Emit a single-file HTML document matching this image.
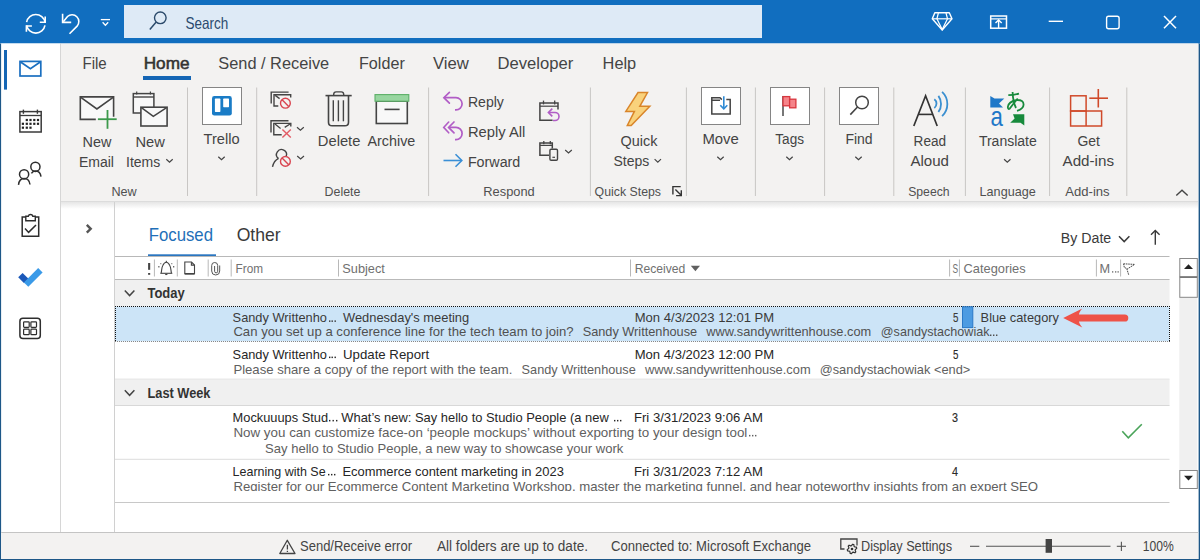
<!DOCTYPE html>
<html><head><meta charset="utf-8"><title>Outlook</title>
<style>html,body{margin:0;padding:0;background:#fff;overflow:hidden}svg{display:block}text{font-family:"Liberation Sans", sans-serif;white-space:pre}</style>
</head><body>
<svg width="1200" height="560" viewBox="0 0 1200 560">
<rect x="0" y="0" width="1200" height="560" fill="#ffffff"/>
<rect x="0" y="0" width="1200" height="43.5" fill="#116ebf"/>
<rect x="124" y="5" width="638" height="33" fill="#deeaf6"/>
<rect x="0" y="43.5" width="60.5" height="489" fill="#ffffff"/>
<rect x="0" y="43.5" width="1.1" height="516.5" fill="#1d5788"/>
<line x1="60.5" y1="43.5" x2="60.5" y2="532" stroke="#d6d6d6" stroke-width="1"/>
<rect x="61" y="43.5" width="1137" height="158" fill="#f3f2f1"/>
<defs><linearGradient id="sh" x1="0" y1="0" x2="0" y2="1"><stop offset="0" stop-color="#e6e6e6"/><stop offset="1" stop-color="#ffffff"/></linearGradient></defs>
<line x1="61" y1="201.5" x2="1198" y2="201.5" stroke="#dcdcdc" stroke-width="1"/>
<rect x="61" y="202" width="1137" height="7" fill="url(#sh)"/>
<rect x="1198.6" y="43.5" width="1.4" height="516.5" fill="#1d5788"/>
<line x1="114.5" y1="202" x2="114.5" y2="532" stroke="#d0d0d0" stroke-width="1"/>
<rect x="1.2" y="532" width="1197" height="28" fill="#f3f2f1"/>
<line x1="1.2" y1="532.5" x2="1198" y2="532.5" stroke="#c4c4c4" stroke-width="1"/>
<rect x="0" y="559" width="1200" height="1" fill="#1d5788"/>
<path d="M26.64 22.2 A9.3 9.3 0 0 1 44.96 22.2" stroke="#ffffff" fill="none" stroke-width="1.6"/>
<path d="M44.96 25.4 A9.3 9.3 0 0 1 26.64 25.4" stroke="#ffffff" fill="none" stroke-width="1.6"/>
<path d="M45.2 16.5 V22.3 H39.8" stroke="#ffffff" fill="none" stroke-width="1.6"/>
<path d="M26.4 31.8 V26 H31.9" stroke="#ffffff" fill="none" stroke-width="1.6"/>
<path d="M62.6 13.8 V22.4 H71.2" stroke="#ffffff" fill="none" stroke-width="1.6"/>
<path d="M63.3 21.8 L67.5 16.5 A6.8 6.8 0 0 1 77.1 26.1 L69.5 33.8" stroke="#ffffff" fill="none" stroke-width="1.6"/>
<line x1="100.8" y1="19.6" x2="110" y2="19.6" stroke="#ffffff" stroke-width="1.3"/>
<path d="M102.6 22.3 L105.4 25.3 L108.2 22.3" stroke="#ffffff" fill="none" stroke-width="1.3"/>
<circle cx="160.3" cy="17.8" r="5.8" stroke="#2b4a6b" stroke-width="1.4" fill="none"/>
<line x1="156" y1="22.2" x2="149.8" y2="29.6" stroke="#2b4a6b" stroke-width="1.5"/>
<text x="185.50" y="29.2" font-size="16.5" fill="#2b4a6e" font-weight="normal" text-anchor="start" textLength="42.81" lengthAdjust="spacingAndGlyphs">Search</text>
<path d="M934.8 12.8 H949.3 L952 18.8 L942.2 30 L932.3 18.8 Z" stroke="#ffffff" fill="none" stroke-width="1.4" stroke-linejoin="round"/>
<line x1="932.6" y1="18.8" x2="951.8" y2="18.8" stroke="#ffffff" stroke-width="1.2"/>
<path d="M938.4 13 L936.9 18.8 L942.2 29.6 L947.5 18.8 L946 13" stroke="#ffffff" fill="none" stroke-width="1.2"/>
<rect x="990.7" y="16" width="15.8" height="12.2" stroke="#fff" stroke-width="1.5" fill="none"/>
<line x1="991" y1="18.9" x2="1006.3" y2="18.9" stroke="#ffffff" stroke-width="1.2"/>
<line x1="998.6" y1="19.8" x2="998.6" y2="28" stroke="#ffffff" stroke-width="1.4"/>
<path d="M995.5 23 L998.6 19.9 L1001.7 23" stroke="#ffffff" fill="none" stroke-width="1.4"/>
<line x1="1048.7" y1="21.3" x2="1063" y2="21.3" stroke="#ffffff" stroke-width="1.4"/>
<rect x="1106.6" y="16.2" width="12.5" height="12.5" rx="2" stroke="#fff" stroke-width="1.4" fill="none"/>
<line x1="1164" y1="16" x2="1176" y2="28.3" stroke="#ffffff" stroke-width="1.5"/>
<line x1="1176" y1="16" x2="1164" y2="28.3" stroke="#ffffff" stroke-width="1.5"/>
<rect x="4" y="50" width="3" height="39.6" fill="#1566b5"/>
<rect x="20" y="61.4" width="20.8" height="14.6" stroke="#1a6fc0" stroke-width="1.7" fill="none"/>
<path d="M20.6 62 L30.4 68.8 L40.2 62" stroke="#1a6fc0" fill="none" stroke-width="1.7"/>
<rect x="19.9" y="111.6" width="21.3" height="20.4" stroke="#3a3a3a" stroke-width="1.5" fill="none"/>
<line x1="20" y1="115.5" x2="41" y2="115.5" stroke="#3a3a3a" stroke-width="1.3"/>
<line x1="23.4" y1="109.6" x2="23.4" y2="113.8" stroke="#3a3a3a" stroke-width="1.4"/>
<line x1="37.4" y1="109.6" x2="37.4" y2="113.8" stroke="#3a3a3a" stroke-width="1.4"/>
<rect x="25.7" y="118.9" width="2.2" height="2.2" fill="#222"/>
<rect x="29.4" y="118.9" width="2.2" height="2.2" fill="#222"/>
<rect x="33.199999999999996" y="118.9" width="2.2" height="2.2" fill="#222"/>
<rect x="36.9" y="118.9" width="2.2" height="2.2" fill="#222"/>
<rect x="21.799999999999997" y="122.7" width="2.2" height="2.2" fill="#222"/>
<rect x="25.7" y="122.7" width="2.2" height="2.2" fill="#222"/>
<rect x="29.4" y="122.7" width="2.2" height="2.2" fill="#222"/>
<rect x="33.199999999999996" y="122.7" width="2.2" height="2.2" fill="#222"/>
<rect x="36.9" y="122.7" width="2.2" height="2.2" fill="#222"/>
<rect x="21.799999999999997" y="126.60000000000001" width="2.2" height="2.2" fill="#222"/>
<rect x="25.7" y="126.60000000000001" width="2.2" height="2.2" fill="#222"/>
<rect x="29.4" y="126.60000000000001" width="2.2" height="2.2" fill="#222"/>
<circle cx="24.1" cy="174.3" r="4.6" stroke="#2e2e2e" stroke-width="1.5" fill="none"/>
<path d="M18.5 184.8 C19 180.3 21.5 178.5 24.1 178.5 C26.7 178.5 29.5 180.3 30 184.5" stroke="#2e2e2e" fill="none" stroke-width="1.5"/>
<circle cx="35.4" cy="166.8" r="4.6" stroke="#2e2e2e" stroke-width="1.5" fill="none"/>
<path d="M31.4 173.4 C32.5 171.5 34 171 35.4 171 C38 171 40.5 173 41 176.6" stroke="#2e2e2e" fill="none" stroke-width="1.5"/>
<path d="M25.8 217 H22.2 V236.3 H38.7 V217 H35.3" stroke="#2e2e2e" fill="none" stroke-width="1.5"/>
<path d="M25.8 216.3 V220.8 H35.3 V216.3 H32.8 A2.3 2.3 0 0 0 28.3 216.3 Z" stroke="#2e2e2e" fill="none" stroke-width="1.4"/>
<path d="M25 228.5 L28.6 232.4 L36 225" stroke="#2e2e2e" fill="none" stroke-width="1.5"/>
<path d="M18.2 277.3 L22.6 272.9 L28.5 278.8 L24.1 283.2 Z" stroke="none" fill="#1b58b8" stroke-width="1" stroke="#1b58b8" stroke-width="0.6" stroke-linejoin="round"/>
<path d="M23.9 282.5 L38.2 268.1 L42.6 272.5 L28.3 286.7 Z" stroke="none" fill="#3a9ae8" stroke-width="1" stroke="#3a9ae8" stroke-width="0.6" stroke-linejoin="round"/>
<rect x="19.9" y="318.2" width="20.4" height="20.2" rx="3" stroke="#2e2e2e" stroke-width="1.5" fill="none"/>
<rect x="23.6" y="321.8" width="5.6" height="5.6" rx="0.8" stroke="#2e2e2e" stroke-width="1.2" fill="none"/>
<rect x="30.9" y="321.8" width="5.6" height="5.6" rx="0.8" stroke="#2e2e2e" stroke-width="1.2" fill="none"/>
<rect x="23.6" y="329.1" width="5.6" height="5.6" rx="0.8" stroke="#2e2e2e" stroke-width="1.2" fill="none"/>
<rect x="30.9" y="329.1" width="5.6" height="5.6" rx="0.8" stroke="#2e2e2e" stroke-width="1.2" fill="none"/>
<text x="82.50" y="68.8" font-size="16.5" fill="#444444" font-weight="normal" text-anchor="start" textLength="24.21" lengthAdjust="spacingAndGlyphs">File</text>
<text x="143.70" y="68.8" font-size="16.5" fill="#333" font-weight="normal" text-anchor="start" textLength="45.79" lengthAdjust="spacingAndGlyphs" stroke="#333" stroke-width="0.55">Home</text>
<rect x="143" y="76" width="48" height="4" fill="#1566b5"/>
<text x="218.30" y="68.8" font-size="16.5" fill="#444444" font-weight="normal" text-anchor="start" textLength="110.90" lengthAdjust="spacingAndGlyphs">Send / Receive</text>
<text x="359.00" y="68.8" font-size="16.5" fill="#444444" font-weight="normal" text-anchor="start" textLength="45.79" lengthAdjust="spacingAndGlyphs">Folder</text>
<text x="432.90" y="68.8" font-size="16.5" fill="#444444" font-weight="normal" text-anchor="start" textLength="35.96" lengthAdjust="spacingAndGlyphs">View</text>
<text x="497.50" y="68.8" font-size="16.5" fill="#444444" font-weight="normal" text-anchor="start" textLength="75.80" lengthAdjust="spacingAndGlyphs">Developer</text>
<text x="602.60" y="68.8" font-size="16.5" fill="#444444" font-weight="normal" text-anchor="start" textLength="33.59" lengthAdjust="spacingAndGlyphs">Help</text>
<line x1="187.5" y1="87.5" x2="187.5" y2="196" stroke="#c8c6c4" stroke-width="1"/>
<line x1="256.7" y1="87.5" x2="256.7" y2="196" stroke="#c8c6c4" stroke-width="1"/>
<line x1="428.6" y1="87.5" x2="428.6" y2="196" stroke="#c8c6c4" stroke-width="1"/>
<line x1="590.4" y1="87.5" x2="590.4" y2="196" stroke="#c8c6c4" stroke-width="1"/>
<line x1="686.4" y1="87.5" x2="686.4" y2="196" stroke="#c8c6c4" stroke-width="1"/>
<line x1="755.4" y1="87.5" x2="755.4" y2="196" stroke="#c8c6c4" stroke-width="1"/>
<line x1="824.6" y1="87.5" x2="824.6" y2="196" stroke="#c8c6c4" stroke-width="1"/>
<line x1="893.8" y1="87.5" x2="893.8" y2="196" stroke="#c8c6c4" stroke-width="1"/>
<line x1="965.4" y1="87.5" x2="965.4" y2="196" stroke="#c8c6c4" stroke-width="1"/>
<line x1="1049.6" y1="87.5" x2="1049.6" y2="196" stroke="#c8c6c4" stroke-width="1"/>
<line x1="1126.8" y1="87.5" x2="1126.8" y2="196" stroke="#c8c6c4" stroke-width="1"/>
<text x="111.40" y="195.7" font-size="13.5" fill="#505050" font-weight="normal" text-anchor="start" textLength="25.27" lengthAdjust="spacingAndGlyphs">New</text>
<text x="324.60" y="195.7" font-size="13.5" fill="#505050" font-weight="normal" text-anchor="start" textLength="35.80" lengthAdjust="spacingAndGlyphs">Delete</text>
<text x="483.30" y="195.7" font-size="13.5" fill="#505050" font-weight="normal" text-anchor="start" textLength="51.40" lengthAdjust="spacingAndGlyphs">Respond</text>
<text x="594.60" y="195.7" font-size="13.5" fill="#505050" font-weight="normal" text-anchor="start" textLength="66.40" lengthAdjust="spacingAndGlyphs">Quick Steps</text>
<text x="908.20" y="195.7" font-size="13.5" fill="#505050" font-weight="normal" text-anchor="start" textLength="41.40" lengthAdjust="spacingAndGlyphs">Speech</text>
<text x="979.60" y="195.7" font-size="13.5" fill="#505050" font-weight="normal" text-anchor="start" textLength="56.10" lengthAdjust="spacingAndGlyphs">Language</text>
<text x="1065.30" y="195.7" font-size="13.5" fill="#505050" font-weight="normal" text-anchor="start" textLength="44.30" lengthAdjust="spacingAndGlyphs">Add-ins</text>
<text x="82.50" y="146.7" font-size="15.5" fill="#444444" font-weight="normal" text-anchor="start" textLength="28.86" lengthAdjust="spacingAndGlyphs">New</text>
<text x="78.90" y="166.6" font-size="15.5" fill="#444444" font-weight="normal" text-anchor="start" textLength="35.09" lengthAdjust="spacingAndGlyphs">Email</text>
<text x="135.40" y="146.7" font-size="15.5" fill="#444444" font-weight="normal" text-anchor="start" textLength="29.36" lengthAdjust="spacingAndGlyphs">New</text>
<text x="126.00" y="166.6" font-size="15.5" fill="#444444" font-weight="normal" text-anchor="start" textLength="34.20" lengthAdjust="spacingAndGlyphs">Items</text>
<path d="M166.3 159.3 L169.5 162.3 L172.7 159.3" stroke="#444" fill="none" stroke-width="1.2"/>
<rect x="80.5" y="97" width="33" height="22" fill="#f9f9f9"/>
<path d="M95.8 119.4 H80.3 V96.9 H113.6 V116.8" stroke="#444444" fill="none" stroke-width="1.6"/>
<path d="M80.8 97.3 L96.9 109 L113.1 97.3" stroke="#444444" fill="none" stroke-width="1.6"/>
<line x1="97.9" y1="119.2" x2="116.7" y2="119.2" stroke="#3c9a4c" stroke-width="1.8"/>
<line x1="107.5" y1="110" x2="107.5" y2="128.8" stroke="#3c9a4c" stroke-width="1.8"/>
<rect x="133.3" y="93.6" width="20.6" height="19.4" stroke="#444444" stroke-width="1.5" fill="#f8f8f8"/>
<line x1="133.5" y1="97" x2="154" y2="97" stroke="#444444" stroke-width="1.4"/>
<line x1="136.7" y1="91.6" x2="136.7" y2="94.5" stroke="#444444" stroke-width="1.2"/>
<line x1="150.4" y1="91.6" x2="150.4" y2="94.5" stroke="#444444" stroke-width="1.2"/>
<rect x="140.9" y="107.2" width="26.2" height="18.8" stroke="#444444" stroke-width="1.6" fill="#f8f8f8"/>
<path d="M141.4 107.7 L153.3 116.3 L166.6 107.7" stroke="#444444" fill="none" stroke-width="1.6"/>
<rect x="202.5" y="87.5" width="39" height="37" stroke="#858585" stroke-width="1" fill="#ffffff"/>
<rect x="212" y="96.1" width="19.8" height="19.4" rx="2.3" fill="#1a7cc6"/>
<rect x="214.9" y="98.6" width="5.5" height="13.3" fill="#ffffff" rx="0.6"/>
<rect x="223.2" y="98.6" width="5.8" height="8.6" fill="#ffffff" rx="0.6"/>
<text x="203.60" y="144.3" font-size="15.5" fill="#444444" font-weight="normal" text-anchor="start" textLength="36.01" lengthAdjust="spacingAndGlyphs">Trello</text>
<path d="M218.3 156.8 L221.5 159.8 L224.7 156.8" stroke="#444" fill="none" stroke-width="1.2"/>
<path d="M271.2 103.5 V92.1 H288.6" stroke="#444444" fill="none" stroke-width="1.4"/>
<path d="M278.3 106 H274 V94.7 H290.7 V97.6" stroke="#444444" fill="none" stroke-width="1.4"/>
<line x1="275.2" y1="95.4" x2="279.6" y2="98.6" stroke="#444444" stroke-width="1.3"/>
<circle cx="285.4" cy="103.2" r="4.9" stroke="#d94550" stroke-width="1.4" fill="none"/>
<line x1="282.1" y1="99.8" x2="288.7" y2="106.6" stroke="#d94550" stroke-width="1.4"/>
<path d="M271 132.5 V120.7 H288.5" stroke="#444444" fill="none" stroke-width="1.4"/>
<path d="M281.7 134.8 H273.8 V123.4 H290.8 V126.6" stroke="#444444" fill="none" stroke-width="1.4"/>
<path d="M275 124 L280.6 128.4 M284.7 127.4 L290 124" stroke="#444444" fill="none" stroke-width="1.3"/>
<line x1="282.4" y1="129.6" x2="290.8" y2="137.6" stroke="#e25a64" stroke-width="1.4"/>
<line x1="290.8" y1="129.6" x2="282.4" y2="137.6" stroke="#e25a64" stroke-width="1.4"/>
<path d="M297.0 127.19999999999999 L300.4 130.2 L303.79999999999995 127.19999999999999" stroke="#444" fill="none" stroke-width="1.2"/>
<path d="M278.3 158.4 A5 5 0 1 1 286.2 156.3" stroke="#444444" fill="none" stroke-width="1.4"/>
<path d="M272.5 166.8 C273.5 162.5 275.5 159.8 278.6 158.4" stroke="#444444" fill="none" stroke-width="1.4"/>
<circle cx="285.4" cy="161.4" r="4.9" stroke="#d94550" stroke-width="1.4" fill="none"/>
<line x1="282.1" y1="158" x2="288.7" y2="164.8" stroke="#d94550" stroke-width="1.4"/>
<path d="M297.20000000000005 156.0 L300.6 159.0 L304.0 156.0" stroke="#444" fill="none" stroke-width="1.2"/>
<path d="M325.5 95.6 H351.7" stroke="#444444" fill="none" stroke-width="1.6"/>
<path d="M333.7 95.3 V94.2 A2.4 2.4 0 0 1 336.1 91.9 H341.3 A2.4 2.4 0 0 1 343.7 94.2 V95.3" stroke="#444444" fill="none" stroke-width="1.4"/>
<path d="M328.5 95.8 V122.2 Q328.5 125.8 332.1 125.8 H344.9 Q348.5 125.8 348.5 122.2 V95.8" stroke="#444444" fill="none" stroke-width="1.6"/>
<line x1="333.3" y1="100.3" x2="333.3" y2="121.3" stroke="#444444" stroke-width="1.4"/>
<line x1="338.4" y1="100.3" x2="338.4" y2="121.3" stroke="#444444" stroke-width="1.4"/>
<line x1="343.4" y1="100.3" x2="343.4" y2="121.3" stroke="#444444" stroke-width="1.4"/>
<text x="317.80" y="146.4" font-size="15.5" fill="#444444" font-weight="normal" text-anchor="start" textLength="42.59" lengthAdjust="spacingAndGlyphs">Delete</text>
<rect x="376.3" y="101.2" width="31" height="22.3" stroke="#444444" stroke-width="1.6" fill="#f8f8f8"/>
<rect x="375" y="94.6" width="33.8" height="6.6" stroke="#5cb068" stroke-width="1.1" fill="#98d6a0"/>
<line x1="384.5" y1="109.4" x2="399.6" y2="109.4" stroke="#444444" stroke-width="1.6"/>
<text x="367.50" y="146.4" font-size="15.5" fill="#444444" font-weight="normal" text-anchor="start" textLength="47.79" lengthAdjust="spacingAndGlyphs">Archive</text>
<path d="M449.4 92.3 L443.9 97.7 L449.4 103.1" stroke="#b15dc6" fill="none" stroke-width="1.7" stroke-linecap="round"/>
<path d="M444.4 97.7 H456 A6.1 6.1 0 0 1 456 109.9 H455" stroke="#b15dc6" fill="none" stroke-width="1.7"/>
<text x="467.90" y="107.4" font-size="15.5" fill="#444444" font-weight="normal" text-anchor="start" textLength="36.00" lengthAdjust="spacingAndGlyphs">Reply</text>
<path d="M448.7 122 L443.7 127.4 L448.7 132.8" stroke="#b15dc6" fill="none" stroke-width="1.6" stroke-linecap="round"/>
<path d="M454 122 L448.6 127.4 L454 132.8" stroke="#b15dc6" fill="none" stroke-width="1.7" stroke-linecap="round"/>
<path d="M449.2 127.4 H456 A6.1 6.1 0 0 1 456 139.6 H455" stroke="#b15dc6" fill="none" stroke-width="1.7"/>
<text x="467.90" y="136.8" font-size="15.5" fill="#444444" font-weight="normal" text-anchor="start" textLength="57.39" lengthAdjust="spacingAndGlyphs">Reply All</text>
<line x1="443.5" y1="160.5" x2="461.5" y2="160.5" stroke="#3a8fd6" stroke-width="1.6"/>
<path d="M455.5 154.3 L461.8 160.5 L455.5 166.7" stroke="#3a8fd6" fill="none" stroke-width="1.6"/>
<text x="467.90" y="166.8" font-size="15.5" fill="#444444" font-weight="normal" text-anchor="start" textLength="52.39" lengthAdjust="spacingAndGlyphs">Forward</text>
<path d="M552.6 120.3 H539.9 V103 H558 V109.4" stroke="#444444" fill="none" stroke-width="1.5"/>
<line x1="540" y1="106.2" x2="558" y2="106.2" stroke="#444444" stroke-width="1.2"/>
<line x1="543.5" y1="100.6" x2="543.5" y2="104.4" stroke="#444444" stroke-width="1.3"/>
<line x1="554.7" y1="100.6" x2="554.7" y2="104.4" stroke="#444444" stroke-width="1.3"/>
<path d="M552.3 108.6 L548.4 112.5 L552.3 116.4" stroke="#b15dc6" fill="none" stroke-width="1.6"/>
<path d="M548.9 112.5 H555 A4 4 0 0 1 555 120.5 H553" stroke="#b15dc6" fill="none" stroke-width="1.6"/>
<path d="M549 155.3 H539.9 V143 H552.3 V148.5" stroke="#444444" fill="none" stroke-width="1.5"/>
<line x1="540" y1="145.4" x2="552.3" y2="145.4" stroke="#444444" stroke-width="1.2"/>
<line x1="543.8" y1="141" x2="543.8" y2="144.2" stroke="#444444" stroke-width="1.3"/>
<line x1="550.3" y1="141" x2="550.3" y2="144.2" stroke="#444444" stroke-width="1.3"/>
<rect x="549.9" y="149.3" width="7.6" height="11" rx="1.2" stroke="#444444" stroke-width="1.4" fill="#f3f2f1"/>
<line x1="552.4" y1="157.3" x2="555" y2="157.3" stroke="#444444" stroke-width="1.2"/>
<path d="M565.2 150.0 L568.5 153.0 L571.8 150.0" stroke="#444" fill="none" stroke-width="1.2"/>
<path d="M638 92.5 H647.5 L639.8 106.3 H649.8 L631.2 125.4 H627.3 L634.4 111.4 H625.8 Z" stroke="#d9852a" fill="#f9d27c" stroke-width="1.5" stroke-linejoin="miter"/>
<text x="620.40" y="146.4" font-size="15.5" fill="#444444" font-weight="normal" text-anchor="start" textLength="36.97" lengthAdjust="spacingAndGlyphs">Quick</text>
<text x="613.50" y="166.1" font-size="15.5" fill="#444444" font-weight="normal" text-anchor="start" textLength="35.80" lengthAdjust="spacingAndGlyphs">Steps</text>
<path d="M654.5999999999999 159.1 L657.8 162.1 L661.0 159.1" stroke="#444" fill="none" stroke-width="1.2"/>
<path d="M672.9 194.6 V186.6 H680.7" stroke="#333" fill="none" stroke-width="1.4"/>
<path d="M675.4 189.6 L681.2 195.3 M681.3 190.3 V195.6 H676.1" stroke="#333" fill="none" stroke-width="1.4"/>
<rect x="701.5" y="87.5" width="39" height="37" stroke="#858585" stroke-width="1" fill="#ffffff"/>
<path d="M720 100.3 H711.8 V114 H730.2 V99.5 H726.3" stroke="#444444" fill="none" stroke-width="1.5"/>
<path d="M711.8 100.3 V97.8 H720 L721.8 99.6" stroke="#444444" fill="none" stroke-width="1.5"/>
<line x1="723.8" y1="96.2" x2="723.8" y2="108.6" stroke="#2e8ad4" stroke-width="1.6"/>
<path d="M720.3 105.2 L723.8 108.8 L727.3 105.2" stroke="#2e8ad4" fill="none" stroke-width="1.6"/>
<text x="702.40" y="144.3" font-size="15.5" fill="#444444" font-weight="normal" text-anchor="start" textLength="36.40" lengthAdjust="spacingAndGlyphs">Move</text>
<path d="M717.3 156.8 L720.5 159.8 L723.7 156.8" stroke="#444" fill="none" stroke-width="1.2"/>
<rect x="770.5" y="87.5" width="39" height="37" stroke="#858585" stroke-width="1" fill="#ffffff"/>
<line x1="783" y1="96" x2="783" y2="116" stroke="#555" stroke-width="1.6"/>
<rect x="783" y="96.6" width="6.8" height="9.2" stroke="#d9363e" stroke-width="1.3" fill="#f5848a"/>
<rect x="789.6" y="99.2" width="6.3" height="8.6" stroke="#d9363e" stroke-width="1.3" fill="#f5848a"/>
<text x="775.30" y="144.3" font-size="15.5" fill="#444444" font-weight="normal" text-anchor="start" textLength="28.70" lengthAdjust="spacingAndGlyphs">Tags</text>
<path d="M786.3 156.8 L789.5 159.8 L792.7 156.8" stroke="#444" fill="none" stroke-width="1.2"/>
<rect x="839.5" y="87.5" width="39" height="37" stroke="#858585" stroke-width="1" fill="#ffffff"/>
<circle cx="862" cy="102.5" r="6.3" stroke="#444444" stroke-width="1.5" fill="none"/>
<line x1="857.5" y1="107" x2="850.3" y2="114.6" stroke="#444444" stroke-width="1.6"/>
<text x="845.40" y="144.3" font-size="15.5" fill="#444444" font-weight="normal" text-anchor="start" textLength="27.20" lengthAdjust="spacingAndGlyphs">Find</text>
<path d="M855.3 156.8 L858.5 159.8 L861.7 156.8" stroke="#444" fill="none" stroke-width="1.2"/>
<path d="M913.8 126 L925.6 95.8 L937.2 126" stroke="#333" fill="none" stroke-width="1.7" stroke-linejoin="miter"/>
<line x1="918.3" y1="114.4" x2="932.8" y2="114.4" stroke="#333" stroke-width="1.6"/>
<path d="M934.3 99.3 A5.3 5.3 0 0 1 934.3 107.9" stroke="#3a8fd0" fill="none" stroke-width="1.8"/>
<path d="M938.4 95.9 A13.6 13.6 0 0 1 938.4 112" stroke="#3a8fd0" fill="none" stroke-width="1.8"/>
<path d="M942.1 91.8 A16.7 16.7 0 0 1 942.1 116.1" stroke="#3a8fd0" fill="none" stroke-width="1.8"/>
<text x="913.60" y="146.4" font-size="15.5" fill="#444444" font-weight="normal" text-anchor="start" textLength="32.50" lengthAdjust="spacingAndGlyphs">Read</text>
<text x="910.40" y="166.1" font-size="15.5" fill="#444444" font-weight="normal" text-anchor="start" textLength="38.59" lengthAdjust="spacingAndGlyphs">Aloud</text>
<text x="990.50" y="125.6" font-size="28" fill="#1f78c8" font-weight="normal" text-anchor="start" textLength="12.38" lengthAdjust="spacingAndGlyphs">a</text>
<path d="M990.3 95.9 L994.5 98.6 L1004.3 98.6 L999 103.5 L1003 107.5 L990.3 107.5 Z" stroke="none" fill="#1f78c8" stroke-width="1"/>
<path d="M1008.3 95.2 Q1013.5 95 1019 93.6" stroke="#178a3c" fill="none" stroke-width="1.8"/>
<path d="M1012.6 92 Q1013 102 1016 108" stroke="#178a3c" fill="none" stroke-width="1.8"/>
<path d="M1017.7 98.5 Q1013 104 1009.8 108.6 Q1008 110 1007.8 107 Q1008.5 101.5 1017 100 Q1023.5 99.8 1023.6 104.5 Q1023.5 109 1017 110.8" stroke="#178a3c" fill="none" stroke-width="1.8"/>
<path d="M1013 114.3 L1024.3 114.3 L1024.3 125.4 L1020.5 122.7 L1010.2 122.7 L1014.6 118.4 Z" stroke="none" fill="#178a3c" stroke-width="1"/>
<text x="978.90" y="146.4" font-size="15.5" fill="#444444" font-weight="normal" text-anchor="start" textLength="57.91" lengthAdjust="spacingAndGlyphs">Translate</text>
<path d="M1004.0999999999999 159.2 L1007.3 162.2 L1010.5 159.2" stroke="#444" fill="none" stroke-width="1.2"/>
<rect x="1070.6" y="111" width="31" height="15" stroke="#d04a2a" stroke-width="1.5" fill="none"/>
<rect x="1070.6" y="95.8" width="15.5" height="15.2" stroke="#d04a2a" stroke-width="1.5" fill="none"/>
<line x1="1086.1" y1="111" x2="1086.1" y2="126" stroke="#d04a2a" stroke-width="1.5"/>
<line x1="1089.3" y1="98.2" x2="1108" y2="98.2" stroke="#d04a2a" stroke-width="1.6"/>
<line x1="1098.3" y1="89" x2="1098.3" y2="107.5" stroke="#d04a2a" stroke-width="1.6"/>
<text x="1077.50" y="146.4" font-size="15.5" fill="#444444" font-weight="normal" text-anchor="start" textLength="22.50" lengthAdjust="spacingAndGlyphs">Get</text>
<text x="1062.50" y="166.1" font-size="15.5" fill="#444444" font-weight="normal" text-anchor="start" textLength="51.49" lengthAdjust="spacingAndGlyphs">Add-ins</text>
<path d="M1176.3 195.5 L1182 190.3 L1187.7 195.5" stroke="#444" fill="none" stroke-width="1.4"/>
<path d="M86.8 224.9 L90.7 228.8 L86.8 232.7" stroke="#555" fill="none" stroke-width="2.4" stroke-linejoin="miter"/>
<text x="148.70" y="240.6" font-size="18.5" fill="#1f6fb8" font-weight="normal" text-anchor="start" textLength="64.31" lengthAdjust="spacingAndGlyphs">Focused</text>
<text x="236.70" y="240.6" font-size="18.5" fill="#3a3a3a" font-weight="normal" text-anchor="start" textLength="44.00" lengthAdjust="spacingAndGlyphs">Other</text>
<rect x="148" y="254.3" width="68" height="1.7" fill="#2a76c0"/>
<text x="1060.80" y="243" font-size="15.5" fill="#3a3a3a" font-weight="normal" text-anchor="start" textLength="50.40" lengthAdjust="spacingAndGlyphs">By Date</text>
<path d="M1119 236.2 L1124.2 241.6 L1129.4 236.2" stroke="#3a3a3a" fill="none" stroke-width="1.5"/>
<line x1="1155.3" y1="230.5" x2="1155.3" y2="244.8" stroke="#3a3a3a" stroke-width="1.4"/>
<path d="M1151 234.8 L1155.3 230.5 L1159.6 234.8" stroke="#3a3a3a" fill="none" stroke-width="1.4"/>
<line x1="115" y1="256.5" x2="1169.5" y2="256.5" stroke="#b8b8b8" stroke-width="1"/>
<line x1="115" y1="279.5" x2="1169.5" y2="279.5" stroke="#acacac" stroke-width="1"/>
<line x1="154.4" y1="259.5" x2="154.4" y2="276.5" stroke="#b8b8b8" stroke-width="1"/>
<line x1="177.3" y1="259.5" x2="177.3" y2="276.5" stroke="#b8b8b8" stroke-width="1"/>
<line x1="208.2" y1="259.5" x2="208.2" y2="276.5" stroke="#b8b8b8" stroke-width="1"/>
<line x1="231.2" y1="259.5" x2="231.2" y2="276.5" stroke="#b8b8b8" stroke-width="1"/>
<line x1="338.5" y1="259.5" x2="338.5" y2="276.5" stroke="#b8b8b8" stroke-width="1"/>
<line x1="630.5" y1="259.5" x2="630.5" y2="276.5" stroke="#b8b8b8" stroke-width="1"/>
<line x1="949.6" y1="259.5" x2="949.6" y2="276.5" stroke="#b8b8b8" stroke-width="1"/>
<line x1="959.4" y1="259.5" x2="959.4" y2="276.5" stroke="#b8b8b8" stroke-width="1"/>
<line x1="1096.4" y1="259.5" x2="1096.4" y2="276.5" stroke="#b8b8b8" stroke-width="1"/>
<line x1="1120.6" y1="259.5" x2="1120.6" y2="276.5" stroke="#b8b8b8" stroke-width="1"/>
<rect x="148.1" y="263" width="2.1" height="6.8" fill="#444"/>
<rect x="148.1" y="273" width="2.1" height="1.8" fill="#444"/>
<path d="M160.3 273.3 H172.3" stroke="#444" fill="none" stroke-width="1.1"/>
<path d="M161.2 273 C161.8 270 161.6 267.5 162.8 265.5 C163.8 263.3 165 262.3 166.3 262.3 C167.6 262.3 168.8 263.3 169.8 265.5 C171 267.5 170.8 270 171.4 273" stroke="#444" fill="none" stroke-width="1.1"/>
<path d="M165.2 274.5 H167.4" stroke="#444" fill="none" stroke-width="1.1"/>
<rect x="165.8" y="260.8" width="1.1" height="1.6" fill="#444"/>
<rect x="158.2" y="266.2" width="1.3" height="1.2" fill="#444"/>
<rect x="173" y="266.2" width="1.3" height="1.2" fill="#444"/>
<rect x="160.3" y="263.2" width="1.0" height="1.0" fill="#555"/>
<rect x="171.3" y="263.2" width="1.0" height="1.0" fill="#555"/>
<path d="M184.8 262 H191.5 L194.5 265 V273.6 H184.8 Z" stroke="#444" fill="none" stroke-width="1.1"/>
<line x1="184.8" y1="273.8" x2="194.5" y2="273.8" stroke="#444" stroke-width="1.6"/>
<path d="M191.4 262.2 V265.1 H194.4" stroke="#444" fill="none" stroke-width="1.1"/>
<path d="M214.6 266 V271.3 A1.55 1.55 0 0 0 217.7 271.3 V265.5 A3 3 0 0 0 211.7 265.5 V271 A4 4 0 0 0 219.7 271 V265.5" stroke="#555" fill="none" stroke-width="1.0"/>
<text x="235.60" y="273" font-size="13" fill="#707070" font-weight="normal" text-anchor="start" textLength="27.50" lengthAdjust="spacingAndGlyphs">From</text>
<text x="342.30" y="273" font-size="13" fill="#707070" font-weight="normal" text-anchor="start" textLength="42.51" lengthAdjust="spacingAndGlyphs">Subject</text>
<text x="634.70" y="272.8" font-size="13" fill="#707070" font-weight="normal" text-anchor="start" textLength="50.60" lengthAdjust="spacingAndGlyphs">Received</text>
<path d="M690.8 265.8 H700 L695.4 271.2 Z" stroke="none" fill="#606060" stroke-width="1"/>
<text x="952.40" y="273" font-size="13" fill="#707070" font-weight="normal" text-anchor="start" textLength="5.60" lengthAdjust="spacingAndGlyphs">S</text>
<text x="963.60" y="273" font-size="13" fill="#707070" font-weight="normal" text-anchor="start" textLength="62.00" lengthAdjust="spacingAndGlyphs">Categories</text>
<text x="1099.60" y="273" font-size="13" fill="#707070" font-weight="normal" text-anchor="start" textLength="10.60" lengthAdjust="spacingAndGlyphs">M</text>
<rect x="1112.0" y="271.2" width="1.3" height="1.4" fill="#707070"/>
<rect x="1115.0" y="271.2" width="1.3" height="1.4" fill="#707070"/>
<rect x="1117.5" y="271.2" width="1.3" height="1.4" fill="#707070"/>
<path d="M1123.6 263.8 L1134.6 264.4 L1127.6 268.8 L1124.3 267.5 Z" stroke="#333" fill="none" stroke-width="0.9" stroke-dasharray="1.6 0.7"/>
<line x1="1126.8" y1="268.8" x2="1128.7" y2="274.8" stroke="#333" stroke-width="0.9" stroke-dasharray="1.6 0.7"/>
<rect x="115" y="279.8" width="1054.5" height="26.7" fill="#f0f0f0"/>
<path d="M124.8 290.6 L129.6 295.6 L134.4 290.6" stroke="#444" fill="none" stroke-width="1.5"/>
<text x="147.50" y="298" font-size="14" fill="#333" font-weight="bold" text-anchor="start" textLength="37.20" lengthAdjust="spacingAndGlyphs">Today</text>
<rect x="115" y="306.5" width="1054.5" height="35" fill="#cce4f7"/>
<line x1="115" y1="306.5" x2="1170" y2="306.5" stroke="#111" stroke-width="1" stroke-dasharray="1 1"/>
<line x1="115" y1="341.5" x2="1170" y2="341.5" stroke="#111" stroke-width="1" stroke-dasharray="1 1"/>
<line x1="115.5" y1="306" x2="115.5" y2="342" stroke="#111" stroke-width="1" stroke-dasharray="1 1"/>
<line x1="1169.5" y1="306" x2="1169.5" y2="342" stroke="#111" stroke-width="1" stroke-dasharray="1 1"/>
<text x="232.60" y="322.3" font-size="13.5" fill="#3a3a3a" font-weight="normal" text-anchor="start" textLength="94.39" lengthAdjust="spacingAndGlyphs">Sandy Writtenho</text>
<rect x="329.0" y="320.4" width="1.4" height="1.5" fill="#3a3a3a"/>
<rect x="331.5" y="320.4" width="1.4" height="1.5" fill="#3a3a3a"/>
<rect x="334.5" y="320.4" width="1.4" height="1.5" fill="#3a3a3a"/>
<text x="343.00" y="322.3" font-size="13.5" fill="#3a3a3a" font-weight="normal" text-anchor="start" textLength="126.20" lengthAdjust="spacingAndGlyphs">Wednesday&#x27;s meeting</text>
<text x="634.70" y="322.3" font-size="13.5" fill="#3a3a3a" font-weight="normal" text-anchor="start" textLength="139.50" lengthAdjust="spacingAndGlyphs">Mon 4/3/2023 12:01 PM</text>
<text x="953.00" y="322.3" font-size="13.5" fill="#3a3a3a" font-weight="normal" text-anchor="start" textLength="5.40" lengthAdjust="spacingAndGlyphs" stroke="#333" stroke-width="0.15">5</text>
<rect x="962.5" y="306.8" width="10.3" height="20.8" fill="#4c9be2" stroke="#2a78c6" stroke-width="1"/>
<text x="980.60" y="321.6" font-size="13.5" fill="#3a3a3a" font-weight="normal" text-anchor="start" textLength="78.40" lengthAdjust="spacingAndGlyphs">Blue category</text>
<text x="233.40" y="336.4" font-size="13.5" fill="#505050" font-weight="normal" text-anchor="start" textLength="340.20" lengthAdjust="spacingAndGlyphs">Can you set up a conference line for the tech team to join?</text>
<text x="582.70" y="336.4" font-size="13.5" fill="#505050" font-weight="normal" text-anchor="start" textLength="114.40" lengthAdjust="spacingAndGlyphs">Sandy Writtenhouse</text>
<text x="706.23" y="336.4" font-size="13.5" fill="#505050" font-weight="normal" text-anchor="start" textLength="164.97" lengthAdjust="spacingAndGlyphs">www.sandywrittenhouse.com</text>
<text x="880.80" y="336.4" font-size="13.5" fill="#505050" font-weight="normal" text-anchor="start" textLength="108.68" lengthAdjust="spacingAndGlyphs">@sandystachowiak</text>
<rect x="990.0" y="334.5" width="1.4" height="1.5" fill="#505050"/>
<rect x="993.0" y="334.5" width="1.4" height="1.5" fill="#505050"/>
<rect x="996.0" y="334.5" width="1.4" height="1.5" fill="#505050"/>
<path d="M1063.2 318 L1082.3 308.5 Q1079 312.5 1079 314.4 H1124.7 A3.6 3.6 0 0 1 1124.7 321.6 H1079 Q1079 323.5 1082.3 327.6 Z" stroke="none" fill="#ee5349" stroke-width="1" stroke="#ee5349" stroke-width="0.6" stroke-linejoin="round"/>
<rect x="115" y="341.5" width="1054.5" height="37.5" fill="#ffffff"/>
<text x="232.60" y="358.5" font-size="13.5" fill="#262626" font-weight="normal" text-anchor="start" textLength="94.39" lengthAdjust="spacingAndGlyphs">Sandy Writtenho</text>
<rect x="329.0" y="356.6" width="1.4" height="1.5" fill="#262626"/>
<rect x="331.5" y="356.6" width="1.4" height="1.5" fill="#262626"/>
<rect x="334.5" y="356.6" width="1.4" height="1.5" fill="#262626"/>
<text x="343.00" y="358.5" font-size="13.5" fill="#262626" font-weight="normal" text-anchor="start" textLength="86.10" lengthAdjust="spacingAndGlyphs">Update Report</text>
<text x="634.70" y="358.5" font-size="13.5" fill="#262626" font-weight="normal" text-anchor="start" textLength="139.50" lengthAdjust="spacingAndGlyphs">Mon 4/3/2023 12:00 PM</text>
<text x="953.00" y="358.5" font-size="13.5" fill="#262626" font-weight="normal" text-anchor="start" textLength="5.40" lengthAdjust="spacingAndGlyphs" stroke="#333" stroke-width="0.15">5</text>
<text x="233.40" y="373.7" font-size="13.5" fill="#606060" font-weight="normal" text-anchor="start" textLength="278.90" lengthAdjust="spacingAndGlyphs">Please share a copy of the report with the team.</text>
<text x="521.60" y="373.7" font-size="13.5" fill="#606060" font-weight="normal" text-anchor="start" textLength="114.20" lengthAdjust="spacingAndGlyphs">Sandy Writtenhouse</text>
<text x="645.03" y="373.7" font-size="13.5" fill="#606060" font-weight="normal" text-anchor="start" textLength="165.57" lengthAdjust="spacingAndGlyphs">www.sandywrittenhouse.com</text>
<text x="819.70" y="373.7" font-size="13.5" fill="#606060" font-weight="normal" text-anchor="start" textLength="150.60" lengthAdjust="spacingAndGlyphs">@sandystachowiak &lt;end&gt;</text>
<line x1="115" y1="379.2" x2="1169.5" y2="379.2" stroke="#dcdcdc" stroke-width="1"/>
<rect x="115" y="379.7" width="1054.5" height="26" fill="#f0f0f0"/>
<line x1="115" y1="405.5" x2="1169.5" y2="405.5" stroke="#d8d8d8" stroke-width="1"/>
<path d="M124.8 390.3 L129.6 395.3 L134.4 390.3" stroke="#444" fill="none" stroke-width="1.5"/>
<text x="147.50" y="398.3" font-size="14" fill="#333" font-weight="bold" text-anchor="start" textLength="62.98" lengthAdjust="spacingAndGlyphs">Last Week</text>
<text x="232.60" y="421.8" font-size="13.5" fill="#262626" font-weight="normal" text-anchor="start" textLength="95.50" lengthAdjust="spacingAndGlyphs">Mockuuups Stud</text>
<rect x="329.0" y="419.9" width="1.4" height="1.5" fill="#262626"/>
<rect x="332.5" y="419.9" width="1.4" height="1.5" fill="#262626"/>
<rect x="336.0" y="419.9" width="1.4" height="1.5" fill="#262626"/>
<text x="341.30" y="421.8" font-size="13.5" fill="#262626" font-weight="normal" text-anchor="start" textLength="267.41" lengthAdjust="spacingAndGlyphs">What’s new: Say hello to Studio People (a new</text>
<rect x="614.0" y="419.9" width="1.4" height="1.5" fill="#262626"/>
<rect x="617.0" y="419.9" width="1.4" height="1.5" fill="#262626"/>
<rect x="620.0" y="419.9" width="1.4" height="1.5" fill="#262626"/>
<text x="634.00" y="421.8" font-size="13.5" fill="#262626" font-weight="normal" text-anchor="start" textLength="128.81" lengthAdjust="spacingAndGlyphs">Fri 3/31/2023 9:06 AM</text>
<text x="952.00" y="421.8" font-size="13.5" fill="#262626" font-weight="normal" text-anchor="start" textLength="6.00" lengthAdjust="spacingAndGlyphs" stroke="#333" stroke-width="0.15">3</text>
<text x="233.40" y="436.8" font-size="13.5" fill="#606060" font-weight="normal" text-anchor="start" textLength="513.91" lengthAdjust="spacingAndGlyphs">Now you can customize face-on ‘people mockups’ without exporting to your design tool</text>
<rect x="749.0" y="434.9" width="1.4" height="1.5" fill="#606060"/>
<rect x="752.0" y="434.9" width="1.4" height="1.5" fill="#606060"/>
<rect x="755.0" y="434.9" width="1.4" height="1.5" fill="#606060"/>
<text x="265.10" y="453.3" font-size="13.5" fill="#606060" font-weight="normal" text-anchor="start" textLength="358.17" lengthAdjust="spacingAndGlyphs">Say hello to Studio People, a new way to showcase your work</text>
<path d="M1122.3 431.3 L1128.3 437.8 L1141.8 424.3" stroke="#4aa45a" fill="none" stroke-width="1.6"/>
<line x1="115" y1="459.3" x2="1169.5" y2="459.3" stroke="#dcdcdc" stroke-width="1"/>
<text x="232.60" y="475.8" font-size="13.5" fill="#262626" font-weight="normal" text-anchor="start" textLength="93.00" lengthAdjust="spacingAndGlyphs">Learning with Se</text>
<rect x="328.0" y="473.9" width="1.4" height="1.5" fill="#262626"/>
<rect x="331.0" y="473.9" width="1.4" height="1.5" fill="#262626"/>
<rect x="334.0" y="473.9" width="1.4" height="1.5" fill="#262626"/>
<text x="342.40" y="475.8" font-size="13.5" fill="#262626" font-weight="normal" text-anchor="start" textLength="221.50" lengthAdjust="spacingAndGlyphs">Ecommerce content marketing in 2023</text>
<text x="634.00" y="475.8" font-size="13.5" fill="#262626" font-weight="normal" text-anchor="start" textLength="128.81" lengthAdjust="spacingAndGlyphs">Fri 3/31/2023 7:12 AM</text>
<text x="952.00" y="475.8" font-size="13.5" fill="#262626" font-weight="normal" text-anchor="start" textLength="6.00" lengthAdjust="spacingAndGlyphs" stroke="#333" stroke-width="0.15">4</text>
<clipPath id="c4"><rect x="115" y="460" width="1055" height="31"/></clipPath>
<g clip-path="url(#c4)">
<text x="233.40" y="490.6" font-size="13.5" fill="#606060" font-weight="normal" text-anchor="start" textLength="804.70" lengthAdjust="spacingAndGlyphs">Register for our Ecommerce Content Marketing Workshop, master the marketing funnel, and hear noteworthy insights from an expert SEO</text>
</g>
<line x1="115" y1="502.5" x2="1169.5" y2="502.5" stroke="#c8c8c8" stroke-width="1"/>
<rect x="1179.3" y="258.3" width="18" height="212" fill="#f0f0f0"/>
<rect x="1179.8" y="258.5" width="17.5" height="18.5" fill="#ffffff" stroke="#888" stroke-width="1"/>
<rect x="1179.8" y="277" width="17.5" height="20.3" fill="#ffffff" stroke="#888" stroke-width="1"/>
<line x1="1180" y1="277.2" x2="1197" y2="277.2" stroke="#777" stroke-width="1.6"/>
<path d="M1184 268.9 L1188.5 264.3 L1193 268.9 Z" stroke="none" fill="#222" stroke-width="1"/>
<rect x="1179.8" y="470.5" width="17.5" height="18" fill="#ffffff" stroke="#888" stroke-width="1"/>
<path d="M1184 475.8 L1193 475.8 L1188.5 480.5 Z" stroke="none" fill="#222" stroke-width="1"/>
<path d="M287.3 540.3 L279.8 553.5 H295 Z" stroke="#444" fill="none" stroke-width="1.3" stroke-linejoin="round"/>
<line x1="287.4" y1="544.8" x2="287.4" y2="549.5" stroke="#444" stroke-width="1.3"/>
<line x1="287.4" y1="550.8" x2="287.4" y2="552" stroke="#444" stroke-width="1.3"/>
<text x="300.00" y="551" font-size="14" fill="#444" font-weight="normal" text-anchor="start" textLength="112.00" lengthAdjust="spacingAndGlyphs">Send/Receive error</text>
<text x="437.00" y="551" font-size="14" fill="#444" font-weight="normal" text-anchor="start" textLength="151.00" lengthAdjust="spacingAndGlyphs">All folders are up to date.</text>
<text x="611.00" y="551" font-size="14" fill="#444" font-weight="normal" text-anchor="start" textLength="200.00" lengthAdjust="spacingAndGlyphs">Connected to: Microsoft Exchange</text>
<path d="M844.5 549 H840.8 V539 H857 V545.5" stroke="#444" fill="none" stroke-width="1.3"/>
<path d="M852.63 544.24 L853.84 544.57 L854.07 546.30 L854.70 546.93 L856.43 547.16 L856.76 548.37 L855.37 549.44 L855.14 550.30 L855.81 551.92 L854.92 552.81 L853.30 552.14 L852.44 552.37 L851.37 553.76 L850.16 553.43 L849.93 551.70 L849.30 551.07 L847.57 550.84 L847.24 549.63 L848.63 548.56 L848.86 547.70 L848.19 546.08 L849.08 545.19 L850.70 545.86 L851.56 545.63 Z" stroke="#333" fill="#f3f2f1" stroke-width="1.2" stroke-linejoin="round"/>
<circle cx="852" cy="549" r="1.3" fill="#333"/>
<text x="861.00" y="551" font-size="14" fill="#444" font-weight="normal" text-anchor="start" textLength="91.00" lengthAdjust="spacingAndGlyphs">Display Settings</text>
<line x1="970" y1="546.3" x2="979.3" y2="546.3" stroke="#555" stroke-width="1.1"/>
<line x1="986" y1="546.3" x2="1110.5" y2="546.3" stroke="#555" stroke-width="1.1"/>
<rect x="1045.6" y="539" width="6.4" height="13.8" fill="#444"/>
<line x1="1116.8" y1="546.3" x2="1126" y2="546.3" stroke="#555" stroke-width="1.1"/>
<line x1="1121.4" y1="541.7" x2="1121.4" y2="550.9" stroke="#555" stroke-width="1.1"/>
<text x="1142.80" y="551" font-size="14" fill="#444" font-weight="normal" text-anchor="start" textLength="31.00" lengthAdjust="spacingAndGlyphs">100%</text>
</svg>
</body></html>
